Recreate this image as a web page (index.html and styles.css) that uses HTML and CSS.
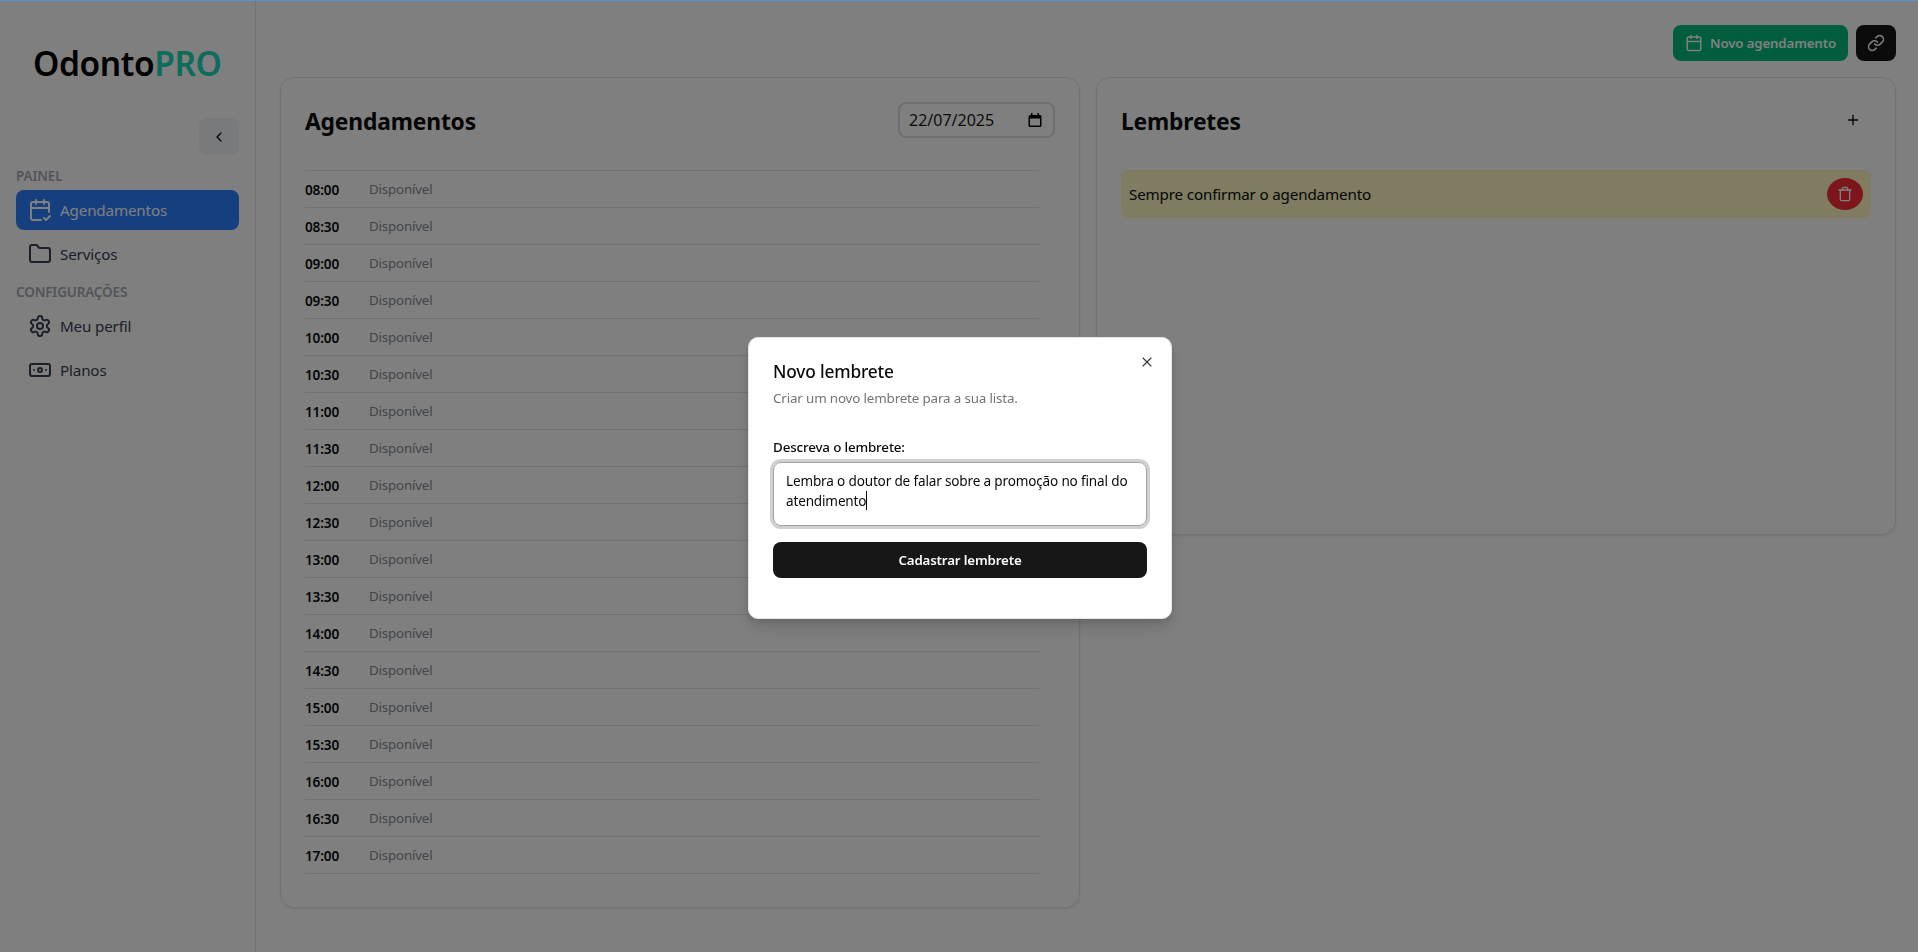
FILE: index.html
```html
<!DOCTYPE html>
<html lang="pt-BR">
<head>
  <meta charset="UTF-8" />
  <meta name="viewport" content="width=device-width, initial-scale=1.0" />
  <title>OdontoPRO</title>
  <link rel="stylesheet" href="styles.css">
</head>
<body>
  <div class="top-line"></div>

  <aside class="sidebar">
    <div class="logo">Odonto<span>PRO</span></div>
    <button class="collapse-btn" type="button">
      <svg class="icon-sm" viewBox="0 0 24 24"><path d="m15 18-6-6 6-6"/></svg>
    </button>
    <nav class="side-nav">
      <span class="nav-label">PAINEL</span>
      <a class="nav-item active">
        <svg class="icon-nav" viewBox="0 0 24 24"><path d="M8 2v4"/><path d="M16 2v4"/><path d="M21 14V6a2 2 0 0 0-2-2H5a2 2 0 0 0-2 2v14a2 2 0 0 0 2 2h8"/><path d="M3 10h18"/><path d="m16 20 2 2 4-4"/></svg>
        Agendamentos
      </a>
      <a class="nav-item">
        <svg class="icon-nav" viewBox="0 0 24 24"><path d="M20 20a2 2 0 0 0 2-2V8a2 2 0 0 0-2-2h-7.9a2 2 0 0 1-1.69-.9L9.6 3.9A2 2 0 0 0 7.93 3H4a2 2 0 0 0-2 2v13a2 2 0 0 0 2 2Z"/></svg>
        Serviços
      </a>
      <span class="nav-label nav-label-next">CONFIGURAÇÕES</span>
      <a class="nav-item">
        <svg class="icon-nav" viewBox="0 0 24 24"><path d="M12.22 2h-.44a2 2 0 0 0-2 2v.18a2 2 0 0 1-1 1.73l-.43.25a2 2 0 0 1-2 0l-.15-.08a2 2 0 0 0-2.73.73l-.22.38a2 2 0 0 0 .73 2.73l.15.1a2 2 0 0 1 1 1.72v.51a2 2 0 0 1-1 1.74l-.15.09a2 2 0 0 0-.73 2.73l.22.38a2 2 0 0 0 2.73.73l.15-.08a2 2 0 0 1 2 0l.43.25a2 2 0 0 1 1 1.73V20a2 2 0 0 0 2 2h.44a2 2 0 0 0 2-2v-.18a2 2 0 0 1 1-1.73l.43-.25a2 2 0 0 1 2 0l.15.08a2 2 0 0 0 2.73-.73l.22-.39a2 2 0 0 0-.73-2.73l-.15-.08a2 2 0 0 1-1-1.74v-.5a2 2 0 0 1 1-1.74l.15-.09a2 2 0 0 0 .73-2.73l-.22-.38a2 2 0 0 0-2.73-.73l-.15.08a2 2 0 0 1-2 0l-.43-.25a2 2 0 0 1-1-1.73V4a2 2 0 0 0-2-2z"/><circle cx="12" cy="12" r="3"/></svg>
        Meu perfil
      </a>
      <a class="nav-item">
        <svg class="icon-nav" viewBox="0 0 24 24"><rect width="20" height="12" x="2" y="6" rx="2"/><circle cx="12" cy="12" r="2"/><path d="M6 12h.01M18 12h.01"/></svg>
        Planos
      </a>
    </nav>
  </aside>

  <main class="main">
    <div class="top-actions">
      <button class="btn-new" type="button">
        <svg class="icon-md" viewBox="0 0 24 24"><path d="M8 2v4"/><path d="M16 2v4"/><rect width="18" height="18" x="3" y="4" rx="2"/><path d="M3 10h18"/></svg>
        Novo agendamento
      </button>
      <button class="btn-link" type="button">
        <svg class="icon-md" viewBox="0 0 24 24"><path d="M10 13a5 5 0 0 0 7.54.54l3-3a5 5 0 0 0-7.07-7.07l-1.72 1.71"/><path d="M14 11a5 5 0 0 0-7.54-.54l-3 3a5 5 0 0 0 7.07 7.07l1.71-1.71"/></svg>
      </button>
    </div>

    <div class="panels">
      <section class="card">
        <header class="card-head">
          <h2>Agendamentos</h2>
          <div class="date-box">
            22/07/2025
            <svg class="date-icon" viewBox="0 0 16 16"><path d="M4 1v2H3a1.500 1.500 0 0 0-1.500 1.500v9A1.500 1.500 0 0 0 3 15h10a1.500 1.500 0 0 0 1.500-1.500v-9A1.500 1.500 0 0 0 13 3h-1V1h-1.500v2h-5V1zM3 6.500h10v7H3z"/></svg>
          </div>
        </header>
        <ul class="slots">
          <li><b>08:00</b><span>Disponível</span></li>
          <li><b>08:30</b><span>Disponível</span></li>
          <li><b>09:00</b><span>Disponível</span></li>
          <li><b>09:30</b><span>Disponível</span></li>
          <li><b>10:00</b><span>Disponível</span></li>
          <li><b>10:30</b><span>Disponível</span></li>
          <li><b>11:00</b><span>Disponível</span></li>
          <li><b>11:30</b><span>Disponível</span></li>
          <li><b>12:00</b><span>Disponível</span></li>
          <li><b>12:30</b><span>Disponível</span></li>
          <li><b>13:00</b><span>Disponível</span></li>
          <li><b>13:30</b><span>Disponível</span></li>
          <li><b>14:00</b><span>Disponível</span></li>
          <li><b>14:30</b><span>Disponível</span></li>
          <li><b>15:00</b><span>Disponível</span></li>
          <li><b>15:30</b><span>Disponível</span></li>
          <li><b>16:00</b><span>Disponível</span></li>
          <li><b>16:30</b><span>Disponível</span></li>
          <li><b>17:00</b><span>Disponível</span></li>
        </ul>
      </section>

      <section class="card card-notes">
        <header class="card-head">
          <h2>Lembretes</h2>
          <button class="btn-plus" type="button">
            <svg class="icon-sm" viewBox="0 0 24 24"><path d="M5 12h14"/><path d="M12 5v14"/></svg>
          </button>
        </header>
        <div class="note">
          <span>Sempre confirmar o agendamento</span>
          <button class="btn-trash" type="button">
            <svg class="icon-sm" viewBox="0 0 24 24"><path d="M3 6h18"/><path d="M19 6v14c0 1-1 2-2 2H7c-1 0-2-1-2-2V6"/><path d="M8 6V4c0-1 1-2 2-2h4c1 0 2 1 2 2v2"/></svg>
          </button>
        </div>
      </section>
    </div>
  </main>

  <!-- Dialog aberto por cima da pagina -->
  <div class="overlay">
    <div class="dialog">
      <button class="dialog-close" type="button">
        <svg class="icon-sm" viewBox="0 0 24 24"><path d="M18 6 6 18"/><path d="m6 6 12 12"/></svg>
      </button>
      <h3>Novo lembrete</h3>
      <p class="dialog-desc">Criar um novo lembrete para a sua lista.</p>
      <label class="field-label">Descreva o lembrete:</label>
      <div class="textarea">Lembra o doutor de falar sobre a promoção no final do atendimento<span class="caret"></span></div>
      <button class="btn-submit" type="button">Cadastrar lembrete</button>
    </div>
  </div>
</body>
</html>
```

FILE: styles.css
```css
* {
  box-sizing: border-box;
}
body {
  font-family: "Noto Sans", "Open Sans", sans-serif;
  background: #fff;
  color: #0a0a0a;
  margin: 0;
  display: flex;
  height: 952px;
  overflow: hidden;
  letter-spacing: -0.01em;
}
button {
  font-family: inherit;
  letter-spacing: inherit;
  border: none;
  background: none;
  padding: 0;
  display: flex;
  align-items: center;
  justify-content: center;
}
svg {
  fill: none;
  stroke: currentColor;
  stroke-width: 2;
  stroke-linecap: round;
  stroke-linejoin: round;
  flex-shrink: 0;
}
.icon-sm {
  width: 16px;
  height: 16px;
}
.icon-md {
  width: 18px;
  height: 18px;
}
.icon-nav {
  width: 24px;
  height: 24px;
}
.top-line {
  position: fixed;
  top: 0;
  left: 0;
  right: 0;
  height: 1px;
  background: #5b8fd6;
  z-index: 20;
}

/* Sidebar */
.sidebar {
  width: 256px;
  flex-shrink: 0;
  border-right: 1px solid #e5e5e5;
  padding: 47px 16px 0;
  display: flex;
  flex-direction: column;
}
.logo {
  font-size: 33.5px;
  line-height: 32px;
  font-weight: 600;
  color: #000;
  padding-left: 17px;
  letter-spacing: -0.4px;
}
.logo span {
  color: #1ad8b4;
}
.collapse-btn {
  width: 40px;
  height: 37px;
  margin: 39px 0 0 auto;
  border-radius: 8px;
  background: #f3f4f6;
  color: #0a0a0a;
}
.side-nav {
  display: flex;
  flex-direction: column;
  margin-top: 11px;
}
.nav-label {
  font-size: 13.5px;
  line-height: 20px;
  font-weight: 600;
  color: #a6aab5;
  margin-bottom: 4px;
}
.nav-label-next {
  margin-top: 4px;
}
.nav-item {
  display: flex;
  align-items: center;
  gap: 8px;
  height: 40px;
  padding-left: 12px;
  margin-bottom: 4px;
  border-radius: 8px;
  font-size: 15.2px;
  color: #364153;
}
.nav-item.active {
  background: #2b7fff;
  color: #fff;
}

/* Area principal */
.main {
  flex: 1;
  min-width: 0;
  padding: 25px 22px 0 24px;
}
.top-actions {
  display: flex;
  justify-content: flex-end;
  gap: 8px;
  height: 36px;
  margin-bottom: 16px;
}
.btn-new {
  gap: 7px;
  width: 175px;
  height: 36px;
  border-radius: 8px;
  background: #00bc7d;
  color: #fff;
  font-size: 13.3px;
  font-weight: 600;
}
.btn-link {
  width: 40px;
  height: 36px;
  border-radius: 8px;
  background: #171717;
  color: #fff;
}
.panels {
  display: flex;
  gap: 16px;
  align-items: flex-start;
}
.card {
  flex: 1;
  height: 831px;
  border: 1px solid #e5e5e5;
  border-radius: 14px;
  box-shadow: 0 1px 3px rgba(0, 0, 0, 0.1);
  padding: 24px;
}
.card-notes {
  height: 458px;
}
.card-head {
  display: flex;
  justify-content: space-between;
  align-items: center;
  height: 36px;
  margin-bottom: 32px;
}
.card-head h2 {
  margin: 0;
  padding-top: 3px;
  font-size: 22.8px;
  font-weight: 700;
}
.date-box {
  display: flex;
  align-items: center;
  justify-content: space-between;
  width: 157px;
  height: 36px;
  padding: 0 10px 0 9px;
  border: 2px solid #dcdcdc;
  border-radius: 8px;
  font-size: 16px;
  letter-spacing: 0;
  color: #1a1a1a;
}
.date-icon {
  width: 16px;
  height: 16px;
  fill: #000;
  stroke: none;
}
.slots {
  list-style: none;
  margin: 0 16px 0 0;
  padding: 0;
  border-bottom: 1px solid #e5e5e5;
}
.slots li {
  display: flex;
  align-items: center;
  height: 37px;
  border-top: 1px solid #e5e5e5;
  font-size: 13.3px;
}
.slots b {
  width: 64px;
  font-size: 13.6px;
  font-weight: 600;
}
.slots span {
  color: #868b96;
}
.btn-plus {
  width: 36px;
  height: 36px;
  color: #0a0a0a;
}
.note {
  display: flex;
  align-items: center;
  justify-content: space-between;
  height: 48px;
  padding: 0 8px;
  border-radius: 8px;
  background: #fef9c2;
  font-size: 15.2px;
}
.btn-trash {
  width: 36px;
  height: 32px;
  border-radius: 50%;
  background: #fb2c36;
  color: #fff;
}

/* Dialog */
.overlay {
  position: fixed;
  inset: 0;
  display: flex;
  align-items: center;
  justify-content: center;
  background: rgba(0, 0, 0, 0.5);
  z-index: 10;
}
.dialog {
  position: relative;
  width: 424px;
  height: 282px;
  margin: 3px 0 0 2px;
  padding: 24px;
  background: #fff;
  border: 1px solid #e5e5e5;
  border-radius: 10px;
  box-shadow: 0 10px 15px rgba(0, 0, 0, 0.1), 0 4px 6px rgba(0, 0, 0, 0.1);
}
.dialog-close {
  position: absolute;
  top: 16px;
  right: 16px;
  color: #333;
}
.dialog-close svg {
  stroke-width: 1.6;
}
.dialog h3 {
  margin: 0;
  font-size: 17.3px;
  line-height: 20px;
  font-weight: 500;
}
.dialog-desc {
  margin: 6px 0 0;
  font-size: 13.4px;
  line-height: 20px;
  color: #737373;
}
.field-label {
  display: block;
  margin: 32px 0 8px;
  font-size: 13.4px;
  line-height: 14px;
  font-weight: 500;
}
.textarea {
  height: 64px;
  padding: 8px 12px;
  border: 1px solid #a1a1a1;
  border-radius: 8px;
  box-shadow: 0 0 0 3px rgba(161, 161, 161, 0.5);
  font-size: 13.55px;
  line-height: 20px;
}
.caret {
  display: inline-block;
  width: 1px;
  height: 19px;
  background: #000;
  vertical-align: -4px;
}
.btn-submit {
  width: 100%;
  height: 36px;
  margin-top: 16px;
  border-radius: 8px;
  background: #171717;
  color: #fafafa;
  font-size: 13.3px;
  font-weight: 600;
}
```
